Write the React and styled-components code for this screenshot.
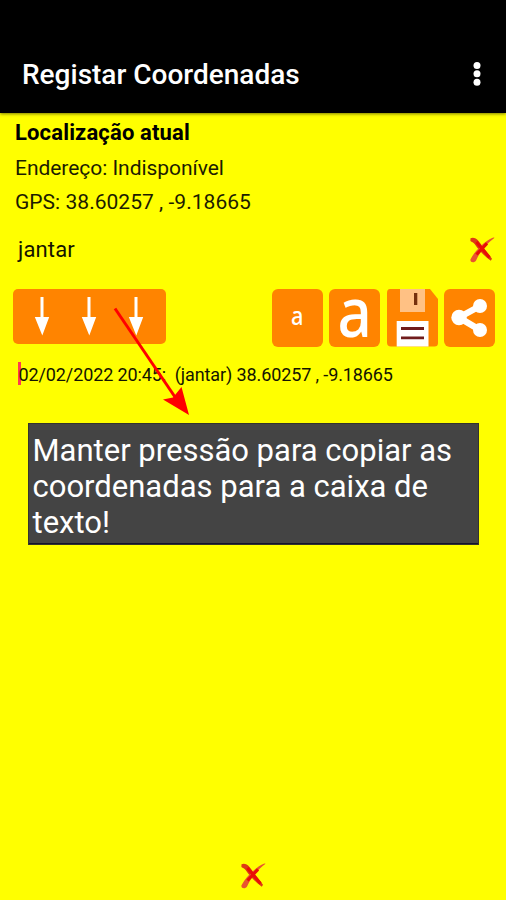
import React from "react";
import styled, { createGlobalStyle } from "styled-components";

const GlobalStyle = createGlobalStyle`
  * { box-sizing: border-box; }
  body { margin: 0; background: #ffff00; }
`;

const Screen = styled.main`
  position: relative;
  display: flex;
  flex-direction: column;
  width: 506px;
  height: 900px;
  overflow: hidden;
  background: #ffff00;
  color: #141400;
  font-family: Roboto, sans-serif;
`;

const AppBar = styled.header`
  display: flex;
  justify-content: space-between;
  align-items: center;
  flex: none;
  height: 113px;
  padding: 37px 20px 0 22px;
  background: #000;
  box-shadow: 0 1px 3px rgba(70, 70, 0, 0.7);
`;

const Title = styled.h1`
  margin: 0;
  color: #fff;
  font-size: 28px;
  font-weight: 500;
  line-height: 36px;
`;

const MenuButton = styled.button`
  display: flex;
  padding: 0;
  border: 0;
  background: none;
  transform: translateY(-1px);
`;

const Location = styled.section`
  display: flex;
  flex-direction: column;
  flex: none;
  height: 107px;
  padding: 2px 15px 0 15px;
`;

const InfoLine = styled.p`
  margin: 0;
  height: ${(p) => p.$height || 35}px;
  color: ${(p) => (p.$strong ? "#000" : "#1c1c00")};
  font-size: ${(p) => (p.$strong ? 22 : 21)}px;
  font-weight: ${(p) => (p.$strong ? 700 : 400)};
  line-height: 35px;
  letter-spacing: ${(p) => p.$spacing || "0"};
  white-space: pre;
`;

const NameRow = styled.div`
  display: flex;
  align-items: center;
  justify-content: space-between;
  flex: none;
  height: 60px;
  padding: 0 10px 0 18px;
`;

const NameText = styled.span`
  font-size: 22px;
  line-height: 30px;
  letter-spacing: 0.15px;
`;

const ClearButton = styled.button`
  display: flex;
  padding: 0;
  border: 0;
  background: none;
`;

const Toolbar = styled.div`
  display: flex;
  align-items: flex-start;
  justify-content: space-between;
  flex: none;
  height: 67px;
  padding: 9px 11px 0 12.5px;
`;

const CopyButton = styled.button`
  display: flex;
  justify-content: space-between;
  align-items: flex-start;
  width: 153.5px;
  height: 54.5px;
  padding: 8px 22px 0 21px;
  border: 0;
  border-radius: 5px;
  background: #ff8400;
`;

const Actions = styled.div`
  display: flex;
  gap: 6.4px;
`;

const ActionButton = styled.button`
  display: flex;
  align-items: center;
  justify-content: center;
  width: 51px;
  height: 57.5px;
  padding: 0;
  border: 0;
  border-radius: ${(p) => (p.$bare ? 0 : "6px")};
  background: ${(p) => (p.$bare ? "none" : "#ff8400")};
`;

const SizeGlyph = styled.span`
  color: #fff;
  font-family: "Noto Sans", sans-serif;
  font-size: ${(p) => p.$size}px;
  font-weight: ${(p) => p.$weight};
  line-height: 57px;
  transform: translateY(${(p) => p.$shift}px) scaleX(0.87);
`;

const Editor = styled.div`
  display: flex;
  align-items: center;
  flex: none;
  height: 52px;
  padding: 4px 18px 0;
`;

const Caret = styled.span`
  width: 3px;
  height: 23px;
  margin: -4px -2.5px 0 0;
  background: #ff3a50;
`;

const RecordText = styled.span`
  font-size: 18px;
  line-height: 24px;
  white-space: pre;
  letter-spacing: -0.11px;
`;

const Hint = styled.aside`
  flex: none;
  width: 451px;
  height: 122px;
  margin: 24px 0 0 28px;
  padding: 10px 0 0 4.5px;
  background: #444;
  box-shadow: inset 0 0 0 1px #34342c, inset 0 -2px 0 #14142a;
  color: #fff;
`;

const HintLine = styled.div`
  height: 36px;
  font-size: 31px;
  line-height: 36px;
  white-space: nowrap;
`;

const Footer = styled.footer`
  display: flex;
  justify-content: center;
  margin-top: auto;
  padding-bottom: 10px;
`;

const Pointer = styled.svg`
  position: absolute;
  left: 110px;
  top: 304px;
  pointer-events: none;
`;

function MoreIcon() {
  return (
    <svg width="18" height="26" viewBox="0 0 18 26" fill="#fff">
      <circle cx="9" cy="4.4" r="3.5" />
      <circle cx="9" cy="12.8" r="3.5" />
      <circle cx="9" cy="21.2" r="3.5" />
    </svg>
  );
}

function CrossIcon() {
  return (
    <svg width="28" height="28" viewBox="0 0 28 28">
      <path d="M2.5 2.3C5 1 8 2 10.5 5L24 22.8 22.8 24.8C16 20 10.5 13.5 6.6 8 5.5 6.2 3.8 6 2.4 5Z" fill="#dc3a16" />
      <path d="M26.6 1.8C18.5 8 12.2 15 8.2 24.2 6.5 27.3 2 26.7 2.4 23.6 5 18 14.5 6 25.3 1.5Z" fill="#e8542f" />
      <path d="M8.5 6 21.5 21.5M19 7.4 8.5 18.5" fill="none" stroke="#e90e05" strokeWidth="3" />
    </svg>
  );
}

function DownArrow() {
  return (
    <svg width="16" height="41" viewBox="0 0 16 41" fill="#fff">
      <path d="M6.5 0h3v20H15.2L8.3 38.5 .8 20H6.5Z" />
    </svg>
  );
}

function SaveIcon() {
  return (
    <svg width="51" height="58" viewBox="0 0 51 58">
      <path d="M3 0H43L51 10V54Q51 57.5 47.5 57.5H4Q0 57.5 0 53.5V4Q0 0 3 0Z" fill="#ff8400" />
      <path d="M13 0H38V23H13Z" fill="#ffc184" />
      <path d="M27 4H30.3V16H27Z" fill="#76300c" />
      <path d="M9.7 32H41.5V57.5H9.7Z" fill="#fff" />
      <path d="M14 39.5H37M14 48.8H37" stroke="#701c1c" strokeWidth="2.8" />
    </svg>
  );
}

function ShareIcon() {
  return (
    <svg width="51" height="58" viewBox="0 0 51 58">
      <path d="M36 17 15 28.5 36 41" fill="none" stroke="#fff" strokeWidth="6.5" />
      <circle cx="36" cy="17" r="7" fill="#fff" />
      <circle cx="15" cy="28.5" r="7.7" fill="#fff" />
      <circle cx="36" cy="41" r="7" fill="#fff" />
    </svg>
  );
}

export default function App() {
  return (
    <>
      <GlobalStyle />
      <Screen>
        <AppBar>
          <Title>Registar Coordenadas</Title>
          <MenuButton aria-label="Menu"><MoreIcon /></MenuButton>
        </AppBar>
        <Location>
          <InfoLine $strong $height={36} $spacing="0.15px">Localização atual</InfoLine>
          <InfoLine $height={34} $spacing="-0.04px">Endereço: Indisponível</InfoLine>
          <InfoLine $spacing="0.03px">GPS: 38.60257 , -9.18665</InfoLine>
        </Location>
        <NameRow>
          <NameText>jantar</NameText>
          <ClearButton aria-label="Limpar"><CrossIcon /></ClearButton>
        </NameRow>
        <Toolbar>
          <CopyButton aria-label="Copiar coordenadas">
            <DownArrow />
            <DownArrow />
            <DownArrow />
          </CopyButton>
          <Actions>
            <ActionButton><SizeGlyph $size={25} $weight={500} $shift={-2}>a</SizeGlyph></ActionButton>
            <ActionButton><SizeGlyph $size={69} $weight={500} $shift={-7}>a</SizeGlyph></ActionButton>
            <ActionButton $bare aria-label="Guardar"><SaveIcon /></ActionButton>
            <ActionButton aria-label="Partilhar"><ShareIcon /></ActionButton>
          </Actions>
        </Toolbar>
        <Editor>
          <Caret />
          <RecordText>02/02/2022 20:45:  (jantar) 38.60257 , -9.18665</RecordText>
        </Editor>
        <Hint>
          <HintLine>Manter pressão para copiar as</HintLine>
          <HintLine>coordenadas para a caixa de</HintLine>
          <HintLine>texto!</HintLine>
        </Hint>
        <Footer>
          <ClearButton aria-label="Apagar"><CrossIcon /></ClearButton>
        </Footer>
        <Pointer width="82" height="114" viewBox="0 0 82 114">
          <path d="M5 4.5 65 93" stroke="#f00" strokeWidth="3" />
          <path d="M79 111 53 95.5 63 93.5 71.5 83Z" fill="#f00" />
        </Pointer>
      </Screen>
    </>
  );
}
